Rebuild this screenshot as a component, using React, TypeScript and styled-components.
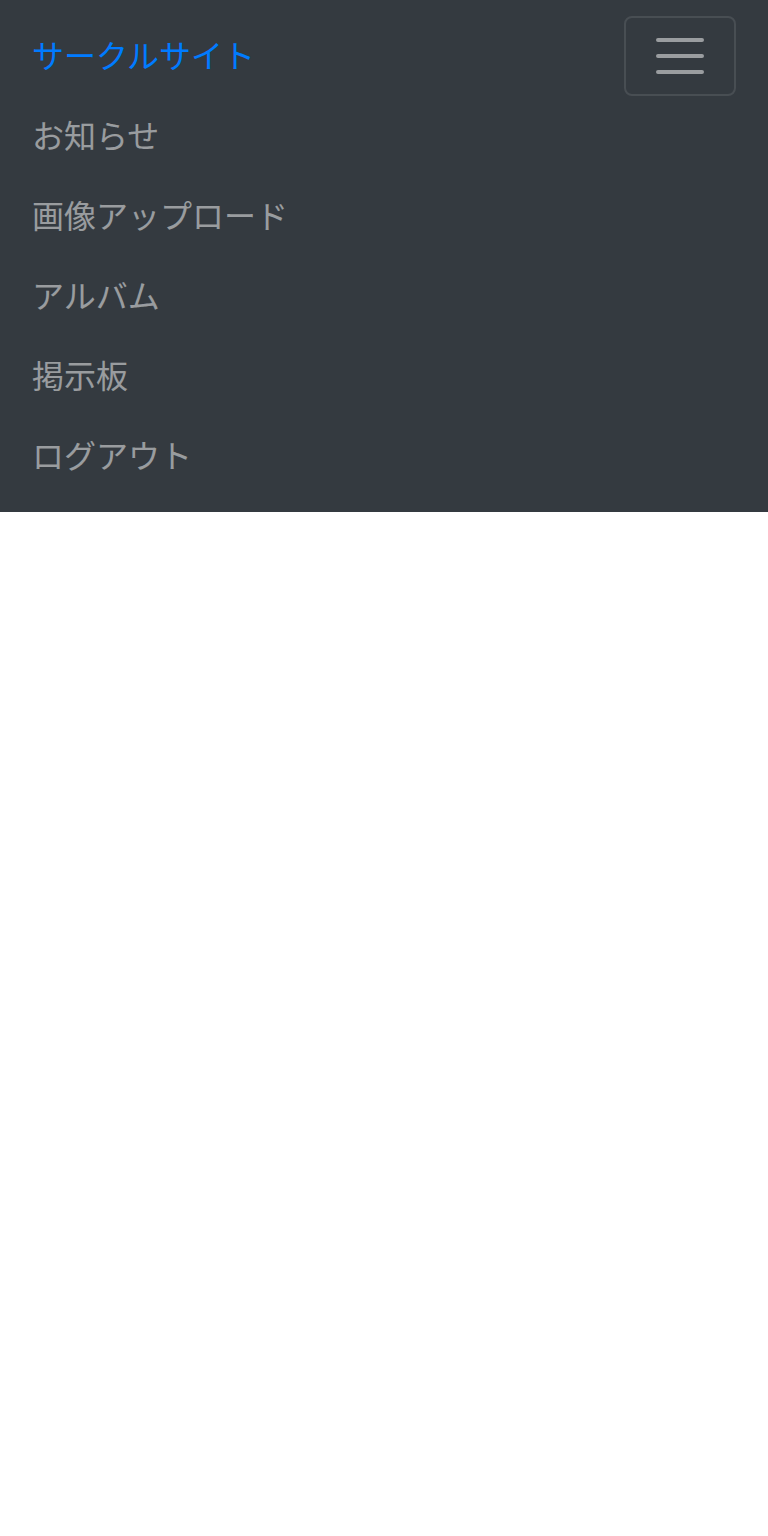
import React, { useState } from 'react'
import styled, { createGlobalStyle } from 'styled-components'

const GlobalStyle = createGlobalStyle`
  html, body {
    margin: 0;
    padding: 0;
    background: #ffffff;
    font-family: "Noto Sans CJK JP", "Noto Sans", sans-serif;
  }
  * {
    box-sizing: border-box;
  }
`

const Navbar = styled.nav`
  display: flex;
  flex-wrap: wrap;
  align-items: center;
  justify-content: space-between;
  padding: 16px 32px;
  background-color: #343a40;
`

const Brand = styled.a`
  color: #007bff;
  font-size: 32px;
  line-height: 48px;
  padding-bottom: 4px;
  text-decoration: none;
  white-space: nowrap;
`

const Toggler = styled.button`
  width: 112px;
  height: 80px;
  padding: 8px 24px;
  background: transparent;
  border: 2px solid rgba(255, 255, 255, 0.1);
  border-radius: 8px;
  display: flex;
  align-items: center;
  justify-content: center;
  cursor: pointer;
`

const Collapse = styled.div<{ open: boolean }>`
  flex-basis: 100%;
  display: ${({ open }) => (open ? 'block' : 'none')};
`

const NavList = styled.ul`
  list-style: none;
  margin: 0;
  padding: 0;
  display: flex;
  flex-direction: column;
`

const NavLink = styled.a`
  display: block;
  padding: 14px 0 18px;
  font-size: 32px;
  line-height: 48px;
  color: rgba(255, 255, 255, 0.5);
  text-decoration: none;
`

const links = ['お知らせ', '画像アップロード', 'アルバム', '掲示板', 'ログアウト']

const App = () => {
  const [open, setOpen] = useState(true)

  return (
    <>
      <GlobalStyle />
      <Navbar>
        <Brand href="#">サークルサイト</Brand>
        <Toggler aria-label="Toggle navigation" onClick={() => setOpen(!open)}>
          <svg width="60" height="60" viewBox="0 0 30 30">
            <path
              d="M4 7h22M4 15h22M4 23h22"
              stroke="rgba(255,255,255,0.5)"
              strokeWidth="2"
              strokeLinecap="round"
              strokeMiterlimit="10"
            />
          </svg>
        </Toggler>
        <Collapse open={open}>
          <NavList>
            {links.map((label) => (
              <li key={label}>
                <NavLink href="#">{label}</NavLink>
              </li>
            ))}
          </NavList>
        </Collapse>
      </Navbar>
    </>
  )
}

export default App
